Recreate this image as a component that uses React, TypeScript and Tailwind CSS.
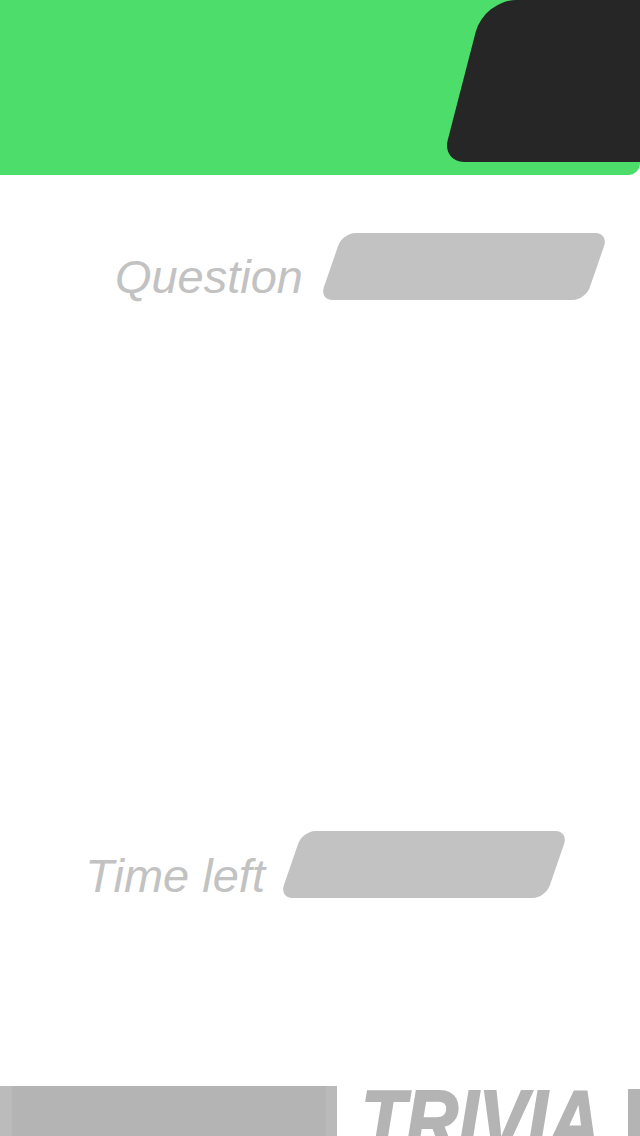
import React from 'react';

const Label: React.FC<{ text: string; className?: string }> = ({ text, className }) => (
  <span
    className={`text-[47px] leading-none italic text-[#c2c2c2] whitespace-nowrap ${className ?? ''}`}
    style={{ fontFamily: '"Liberation Sans", Arial, sans-serif' }}
  >
    {text}
  </span>
);

export default function App() {
  return (
    <div className="w-[640px] h-[1136px] overflow-hidden bg-white flex flex-col">
      {/* header */}
      <div className="h-[175px] shrink-0 bg-[#4cdd6a] rounded-br-[12px] flex justify-end items-start overflow-hidden">
        <div className="w-[200px] h-[162px] mr-[-23px] bg-[#262626] -skew-x-[14.5deg] rounded-tl-[32px] rounded-bl-[22px]" />
      </div>

      {/* question */}
      <div className="mt-[58px] flex justify-end items-start pr-[43px] gap-[28px]">
        <Label text="Question" className="mt-[20px]" />
        <div className="w-[266px] h-[67px] bg-[#c2c2c2] -skew-x-[19deg] rounded-[13px]" />
      </div>

      {/* time left */}
      <div className="mt-[531px] flex justify-end items-start pr-[83px] gap-[26px]">
        <Label text="Time left" className="mt-[21px]" />
        <div className="w-[266px] h-[67px] bg-[#c2c2c2] -skew-x-[19deg] rounded-[13px]" />
      </div>

      {/* footer */}
      <div className="mt-[187px] h-[51px] shrink-0 flex items-start">
        <div className="w-[337px] shrink-0 h-full bg-[#b5b4b5] flex justify-between">
          <div className="w-[12px] h-full bg-[#bbbbbb]" />
          <div className="w-[11px] h-full bg-[#bababa]" />
        </div>
        <div className="ml-[24px] -mt-[9px] w-[245px] shrink-0">
          <span
            className="block origin-left scale-x-[0.83] text-[88px] leading-none font-bold italic text-[#b5b4b5] whitespace-nowrap [-webkit-text-stroke:2px_#b5b4b5]"
            style={{ fontFamily: '"Liberation Sans", Arial, sans-serif' }}
          >
            TRIVIA
          </span>
        </div>
        <div className="ml-auto mt-[3px] shrink-0 w-[12px] h-[48px] bg-[#b5b4b5]" />
      </div>
    </div>
  );
}
